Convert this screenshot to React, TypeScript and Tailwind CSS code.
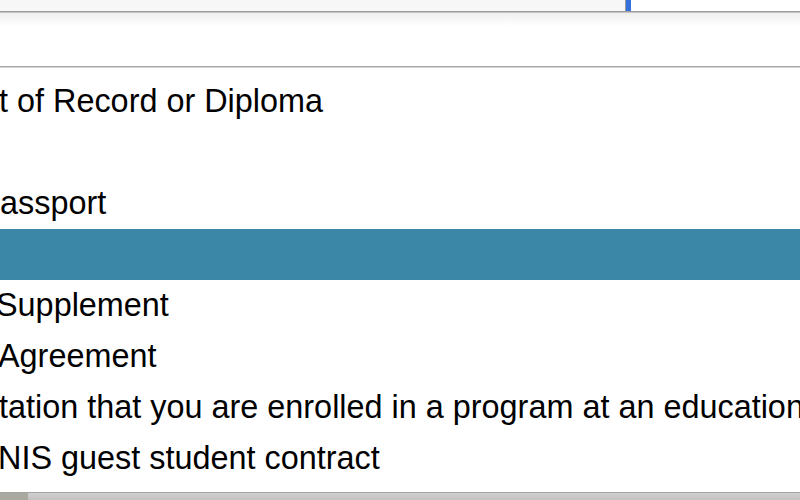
const items = [
  { text: 't of Record or Diploma', shift: '-ml-[1px]' },
  { text: '', shift: '' },
  { text: 'assport', shift: 'ml-0' },
  { text: '', shift: '', selected: true },
  { text: 'Supplement', shift: '-ml-[4px]' },
  { text: 'Agreement', shift: '-ml-[2px]' },
  { text: 'tation that you are enrolled in a program at an educational institution', shift: '-ml-[1px]' },
  { text: 'NIS guest student contract', shift: '-ml-[2px]' },
]

export default function App() {
  return (
    <div className="flex h-[500px] w-[800px] flex-col overflow-hidden bg-white font-['Liberation_Sans',Arial,sans-serif] text-black">
      {/* strip of the control above */}
      <div className="flex h-[11px] shrink-0">
        <div className="w-[625px] bg-[#f7f7f7]" />
        <div className="w-px bg-[#9a9a9a]" />
        <div className="w-[5px] bg-[#3571dd]" />
        <div className="flex-1 bg-white" />
      </div>
      <div className="h-px shrink-0 bg-[#9c9c9c]" />
      <div className="h-px shrink-0 bg-[#c4c4c4]" />

      {/* search box */}
      <div className="h-[53px] shrink-0 bg-gradient-to-b from-[#efefef] via-white via-25% to-white" />
      <div className="h-px shrink-0 bg-[#a6a6a6]" />
      <div className="h-px shrink-0 bg-[#d6d6d6]" />

      {/* option list */}
      <ul className="flex-1 overflow-hidden pt-[8px]">
        {items.map((item, i) => (
          <li
            key={i}
            className={
              'flex h-[51px] items-center overflow-hidden whitespace-nowrap text-[32.4px] leading-none ' +
              (item.selected ? 'bg-[#3b87a8] text-white' : '')
            }
          >
            <span className={item.shift}>{item.text}</span>
          </li>
        ))}
      </ul>

      {/* bottom edge */}
      <div className="h-px shrink-0 bg-[#a4a4a4]" />
      <div className="flex h-[7px] shrink-0">
        <div className="w-[28px] bg-[#a9a9a2]" />
        <div className="flex-1 bg-gradient-to-b from-[#cfcfcf] to-[#c2c2c2]" />
      </div>
    </div>
  )
}
